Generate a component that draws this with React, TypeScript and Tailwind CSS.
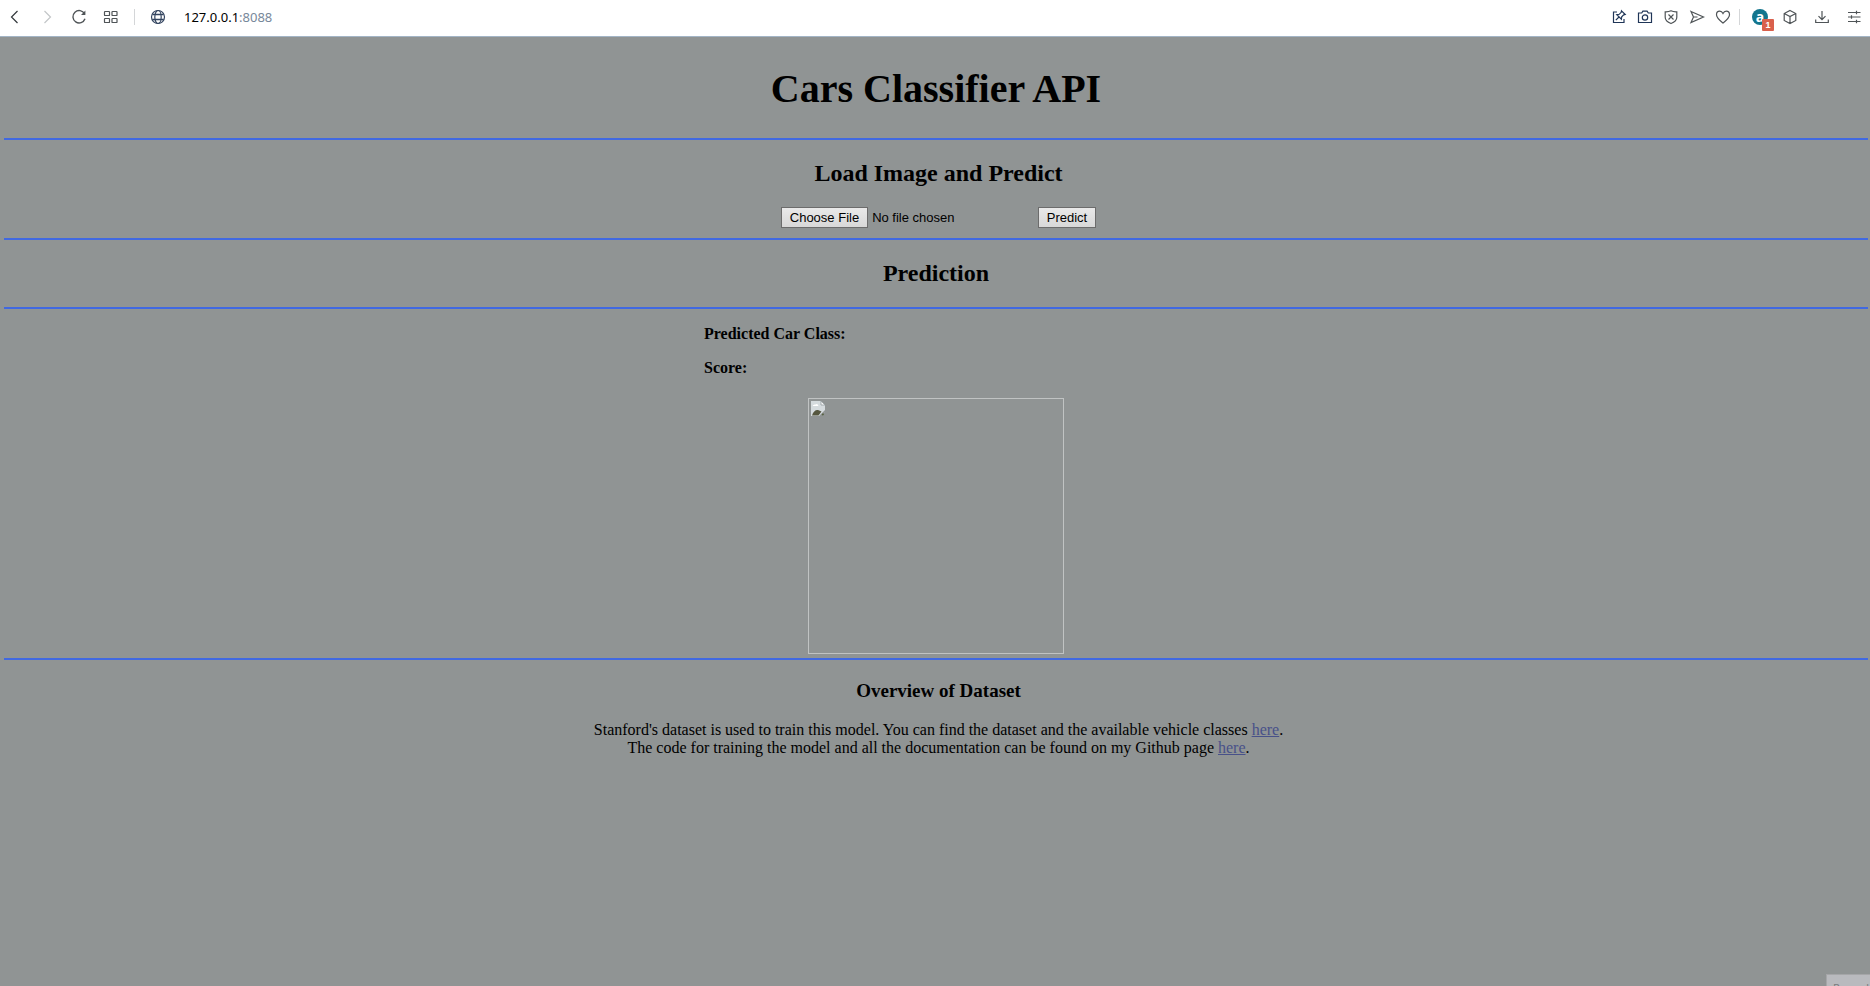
import React from "react";

const iconProps = {
  fill: "none",
  stroke: "currentColor",
  strokeWidth: 1.2,
  "aria-hidden": true,
} as const;

function Rule() {
  return <hr className="h-0.5 w-full border-0 bg-[#4169e1]" />;
}

function ToolButton({ label, className = "", children }: { label: string; className?: string; children: React.ReactNode }) {
  return (
    <button type="button" aria-label={label} className={`flex size-4 items-center justify-center ${className}`}>
      {children}
    </button>
  );
}

function BrowserBar() {
  return (
    <header className="flex h-[37px] w-full items-center justify-between border-b border-[#a3b5c6] bg-white pr-2 pb-0.5 pl-1.5 text-[#4f5457]">
      <div className="flex items-center gap-4">
        <ToolButton label="Back" className="text-[#33383c]">
          <svg {...iconProps} viewBox="0 0 16 16" className="size-4"><path d="M11.500 2 5.500 8l6 6" /></svg>
        </ToolButton>
        <ToolButton label="Forward" className="text-[#c3c6c8]">
          <svg {...iconProps} viewBox="0 0 16 16" className="size-4"><path d="m6.500 2 6 6-6 6" /></svg>
        </ToolButton>
        <ToolButton label="Reload" className="ml-px">
          <svg {...iconProps} strokeWidth={1.4} viewBox="0 0 16 16" className="size-4">
            <path d="M13.600 4.800A6.200 6.200 0 1 0 14 9.800" />
            <path d="M14.400 1.500v4.500H10z" fill="currentColor" stroke="none" />
          </svg>
        </ToolButton>
        <ToolButton label="Tabs">
          <svg {...iconProps} viewBox="0 0 16 16" className="size-4">
            <rect x="1.500" y="2.500" width="5" height="4" rx=".6" />
            <rect x="9" y="2.500" width="5" height="4" rx=".6" />
            <rect x="1.500" y="9.500" width="5" height="4" rx=".6" />
            <rect x="9" y="9.500" width="5" height="4" rx=".6" />
          </svg>
        </ToolButton>
        <span className="mr-[-1px] ml-[-1px] h-4 w-px bg-[#d4d6d8]" />
        <ToolButton label="Site information" className="text-[#33445f]">
          <svg {...iconProps} viewBox="0 0 16 16" className="size-4">
            <circle cx="8" cy="8" r="6.500" />
            <ellipse cx="8" cy="8" rx="3.200" ry="6.500" />
            <path d="M2.500 5.500h11M2.500 10.500h11" strokeWidth={1.500} />
          </svg>
        </ToolButton>
        <span className="ml-0.5 font-['Noto_Sans',sans-serif] text-[13px] leading-4 text-black">
          127.0.0.1<span className="text-[#78889a]">:8088</span>
        </span>
      </div>
      <div className="flex items-center gap-2.5">
        <ToolButton label="Edit page" className="text-[#1f3557]">
          <svg {...iconProps} viewBox="0 0 16 16" className="size-4">
            <path d="M6 3H2.500v10.500h10.500V10" />
            <path d="m10.500 1.800 3.700 3.700-1.500.3-2 2-.3 2.400-4.600-4.600 2.400-.3 2-2zM8 8 4.800 11.200" />
          </svg>
        </ToolButton>
        <ToolButton label="Snapshot" className="text-[#1f3557]">
          <svg {...iconProps} viewBox="0 0 16 16" className="size-4">
            <path d="M1.500 4h3.200l1.200-1.800h4.200L11.300 4h3.200v9.500h-13z" /><circle cx="8" cy="8.500" r="2.700" />
          </svg>
        </ToolButton>
        <ToolButton label="Blocker">
          <svg {...iconProps} viewBox="0 0 16 16" className="size-4">
            <path d="M8 1.800c2 1 3.700 1.100 5.800 1v5.400c0 3-2.400 5-5.800 6.300-3.400-1.300-5.800-3.300-5.800-6.300V2.800c2.100.1 3.800 0 5.800-1zM5.500 5.500l5 5M10.500 5.500l-5 5" />
          </svg>
        </ToolButton>
        <ToolButton label="Send">
          <svg {...iconProps} viewBox="0 0 16 16" className="size-4"><path d="m2 2.500 12.500 5.500L2 13.500 4.500 8zM4.500 8h4" /></svg>
        </ToolButton>
        <ToolButton label="Bookmark">
          <svg {...iconProps} viewBox="0 0 16 16" className="size-4"><path d="M8 14C5.500 12 1.500 9 1.500 5.700 1.500 3.500 3 2.200 4.700 2.200c1.500 0 2.600.8 3.300 2.200.7-1.400 1.800-2.200 3.300-2.200 1.700 0 3.200 1.300 3.200 3.500C14.500 9 10.500 12 8 14z" /></svg>
        </ToolButton>
        <span className="mr-0.5 ml-[-2px] h-4 w-px bg-[#d4d6d8]" />
        <button type="button" aria-label="Extension, 1 notification" className="relative size-4 rounded-full bg-[#13758d] text-center font-['Open_Sans',sans-serif] text-[14px] leading-3 font-bold text-white">
          a
          <span className="absolute top-2.5 left-2.5 h-3 w-3 rounded-[1px] bg-[#d9604c] font-['Liberation_Sans',sans-serif] text-[9px] leading-3 font-bold">1</span>
        </button>
        <ToolButton label="Extensions" className="ml-1">
          <svg {...iconProps} viewBox="0 0 16 16" className="size-4"><path d="m8 1.500 5.800 3v7L8 14.500l-5.800-3v-7zM2.200 4.500 8 7.500l5.800-3M8 7.500v7" /></svg>
        </ToolButton>
        <ToolButton label="Downloads" className="ml-1.5">
          <svg {...iconProps} viewBox="0 0 16 16" className="size-4"><path d="M8 2v8.500M4.500 7.200 8 10.700l3.500-3.500M1.700 10.500v3h12.600v-3" /></svg>
        </ToolButton>
        <ToolButton label="Easy setup" className="ml-1.5">
          <svg {...iconProps} viewBox="0 0 16 16" className="size-4"><path d="M2 3.500h12.500M2 8h12.500M2 12.500h12.500M10.500 1.700v3.600M5.500 6.200v3.600M10.500 10.700v3.600" /></svg>
        </ToolButton>
      </div>
    </header>
  );
}

function BrokenImage() {
  return (
    <div role="img" aria-label="Uploaded car" className="mx-auto size-64 border border-[#c0c3c3] p-0.5">
      <svg viewBox="0 0 16 16" className="size-4" aria-hidden="true">
        <path d="M0 0h10l4 4v7l-2 1-3 3H0z" fill="#d5dbde" />
        <path d="M1.500 5q1-2 3-1.500 2-1.500 3 1.500z" fill="#fff" />
        <path d="M10 0v4h4z" fill="#f8f8f8" stroke="#8d9799" strokeWidth=".7" />
        <path d="M1 14.500q2-6 6-5.500l3.500 1.500-3 4z" fill="#56573f" />
        <path d="m8 15 6-6v2l-4 4z" fill="#909494" />
        <path d="m10.500 14 1.500-2 1 1.500-1 1z" fill="#56613f" />
      </svg>
    </div>
  );
}

const linkClass = "text-[#485189] underline";

export default function App() {
  return (
    <div className="relative flex min-h-screen flex-col overflow-hidden bg-[#909494] font-['Liberation_Serif',serif] text-base leading-[18px] text-black">
      <BrowserBar />
      <main className="pt-[29px] pr-0.5 pl-1">
        <h1 className="mb-[27px] text-center text-[40px] leading-[45px] font-bold">Cars Classifier API</h1>
        <Rule />
        <section className="pt-5 pb-2.5 pl-[5px]">
          <h2 className="mb-5 text-center text-2xl leading-[27px] font-bold">Load Image and Predict</h2>
          <form className="flex justify-center gap-1 font-['Liberation_Sans',sans-serif] text-[13px]" onSubmit={(e) => e.preventDefault()}>
            <input
              type="file"
              aria-label="Choose an image"
              className="h-[21px] w-[253px] leading-[19px] file:h-[21px] file:border file:border-solid file:border-[#6c6c6c] file:bg-linear-to-b file:from-[#e9e9e9] file:to-[#d8d8d8] file:px-2 file:text-black"
            />
            <button type="submit" className="h-[21px] border border-[#6c6c6c] bg-linear-to-b from-[#e9e9e9] to-[#d8d8d8] px-2 leading-[19px]">
              Predict
            </button>
          </form>
        </section>
        <Rule />
        <h2 className="pt-5 pb-5 text-center text-2xl leading-[27px] font-bold">Prediction</h2>
        <Rule />
        <section className="pt-4 pb-1">
          <div className="mx-auto mb-[21px] flex w-[464px] flex-col gap-4 font-bold">
            <h4>Predicted Car Class:</h4>
            <h4>Score:</h4>
          </div>
          <BrokenImage />
        </section>
        <Rule />
        <section className="pt-5 pl-[5px] text-center">
          <h3 className="mb-5 text-[19px] leading-[21px] font-bold">Overview of Dataset</h3>
          <p>
            Stanford's dataset is used to train this model. You can find the dataset and the available vehicle classes{" "}
            <a href="#dataset" className={linkClass}>here</a>.
            <br />
            The code for training the model and all the documentation can be found on my Github page{" "}
            <a href="#github" className={linkClass}>here</a>.
          </p>
        </section>
      </main>
      <div className="absolute right-0 bottom-0 h-3 w-11 overflow-hidden border-t border-l border-[#a5a6a8] bg-[#b9babe] pt-1 pl-1.5 font-['Noto_Sans',sans-serif] text-[11px] text-[#7b7c7e]">
        Record
      </div>
    </div>
  );
}
